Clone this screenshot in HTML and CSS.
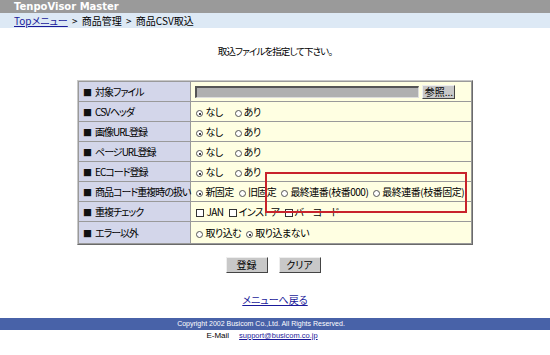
FILE: index.html
```html
<!DOCTYPE html>
<html lang="ja">
<head>
<meta charset="utf-8">
<link rel="stylesheet" href="styles.css">
</head>
<body>
<div class="titlebar">TenpoVisor Master</div>
<div class="crumb"><a href="#">Topメニュー</a> &gt; 商品管理 &gt; 商品CSV取込</div>
<p class="lead">取込ファイルを指定して下さい。</p>
<div class="formwrap">
  <table class="form">
    <tr><th><span class="sq">■</span>対象ファイル</th><td><span class="file"><span class="filebox"></span><span class="btn small">参照...</span></span></td></tr>
    <tr><th><span class="sq">■</span>CSVヘッダ</th><td><span class="opt wide"><span class="r on"></span>なし</span><span class="opt"><span class="r"></span>あり</span></td></tr>
    <tr><th><span class="sq">■</span>画像URL登録</th><td><span class="opt wide"><span class="r on"></span>なし</span><span class="opt"><span class="r"></span>あり</span></td></tr>
    <tr><th><span class="sq">■</span>ページURL登録</th><td><span class="opt wide"><span class="r on"></span>なし</span><span class="opt"><span class="r"></span>あり</span></td></tr>
    <tr><th><span class="sq">■</span>ECコード登録</th><td><span class="opt wide"><span class="r on"></span>なし</span><span class="opt"><span class="r"></span>あり</span></td></tr>
    <tr><th><span class="sq">■</span>商品コード重複時の扱い</th><td><span class="opt"><span class="r on"></span>新固定</span><span class="opt"><span class="r"></span>旧固定</span><span class="opt"><span class="r"></span>最終連番(枝番000)</span><span class="opt"><span class="r"></span>最終連番(枝番固定)</span></td></tr>
    <tr><th><span class="sq">■</span>重複チェック</th><td><span class="opt"><span class="c"></span>JAN</span><span class="opt"><span class="c"></span>インストア</span><span class="opt"><span class="c"></span>バーコード</span></td></tr>
    <tr class="last"><th><span class="sq">■</span>エラー以外</th><td><span class="opt"><span class="r"></span>取り込む</span><span class="opt"><span class="r on"></span>取り込まない</span></td></tr>
  </table>
  <div class="mark"></div>
</div>
<div class="buttons"><span class="btn">登録</span><span class="btn">クリア</span></div>
<div class="back"><a href="#">メニューへ戻る</a></div>
<div class="footer">Copyright 2002 Busicom Co.,Ltd. All Rights Reserved.</div>
<div class="mail">E-Mail<a href="#">support@busicom.co.jp</a></div>
</body>
</html>
```
FILE: styles.css
```css
html, body { margin: 0; padding: 0; background: #fff; }
body { font-family: "Noto Sans CJK JP", "DejaVu Sans", sans-serif; font-size: 10px; color: #000; font-feature-settings: "palt"; }
.titlebar { height: 13px; background: #9a9a9a; color: #fff; font-weight: bold; font-family: "DejaVu Sans", sans-serif; font-size: 10px; line-height: 13px; padding-left: 14px; }
.crumb { height: 15px; background: #dde9f5; line-height: 15px; padding-left: 14px; font-size: 10px; word-spacing: 2px; }
.crumb a, .back a, .mail a { color: #1a1a9a; }
.lead { margin: 0; padding-top: 16px; height: 52px; text-align: center; font-size: 9.5px; letter-spacing: -0.9px; line-height: 14px; box-sizing: border-box; }
.formwrap { position: relative; width: 396px; margin: 0 0 0 77px; }
.form { border-collapse: separate; border-spacing: 1px; background: #9a9a9a; border: 1px solid; border-color: #c8c8c8 #6a6a6a #6a6a6a #c8c8c8; width: 396px; }
.form th { background: #d3d6ea; font-weight: normal; text-align: left; width: 104px; height: 19px; padding: 0 0 0 4px; white-space: nowrap; font-size: 10px; letter-spacing: -1px; }
.sq { font-size: 9px; letter-spacing: 0; margin-right: 3px; color: #111; }
.form td { background: #ffffe2; height: 19px; padding: 0 0 0 5px; white-space: nowrap; font-size: 10px; letter-spacing: -0.5px; }
.form tr.last th, .form tr.last td { height: 21px; }
.opt { margin-right: 5px; }
.opt.wide { margin-right: 12px; }
.r, .c { display: inline-block; box-sizing: border-box; width: 7px; height: 7px; border: 1px solid #555; border-radius: 50%; background: #fff; vertical-align: -1px; margin-right: 2px; position: relative; }
.r.on::after { content: ""; position: absolute; left: 1.5px; top: 1.5px; width: 2px; height: 2px; border-radius: 50%; background: #000; }
.c { width: 8px; height: 8px; border-radius: 0; border-color: #333; }
.file { display: flex; align-items: center; gap: 3px; margin-left: -1px; }
.filebox { width: 221px; height: 9px; background: #b0b0b0; border-top: 2px solid #555; border-left: 2px solid #555; border-bottom: 1px solid #ddd; border-right: 1px solid #ddd; }
.btn { display: inline-block; background: #c8c8c8; border: 1px solid; border-color: #eee #444 #444 #eee; text-align: center; width: 40px; height: 14px; line-height: 14px; font-size: 10px; }
.btn.small { width: 31px; height: 12px; line-height: 12px; letter-spacing: 0; }
.mark { position: absolute; left: 188px; top: 92px; width: 198px; height: 37px; border: 2px solid #c8232c; }
.buttons { display: flex; justify-content: center; gap: 11px; margin-top: 12px; padding-right: 4px; }
.back { text-align: center; margin-top: 20px; height: 14px; line-height: 14px; font-size: 10px; }
.footer { margin-top: 11px; height: 12px; line-height: 12px; background: #4862a8; color: #fff; text-align: center; font-size: 7px; font-family: "Liberation Sans", sans-serif; padding-right: 28px; }
.mail { text-align: center; padding-top: 0; font-size: 8px; line-height: 12px; font-family: "Liberation Sans", sans-serif; padding-right: 26px; }
.mail a { margin-left: 10px; font-size: 7.5px; }
```
